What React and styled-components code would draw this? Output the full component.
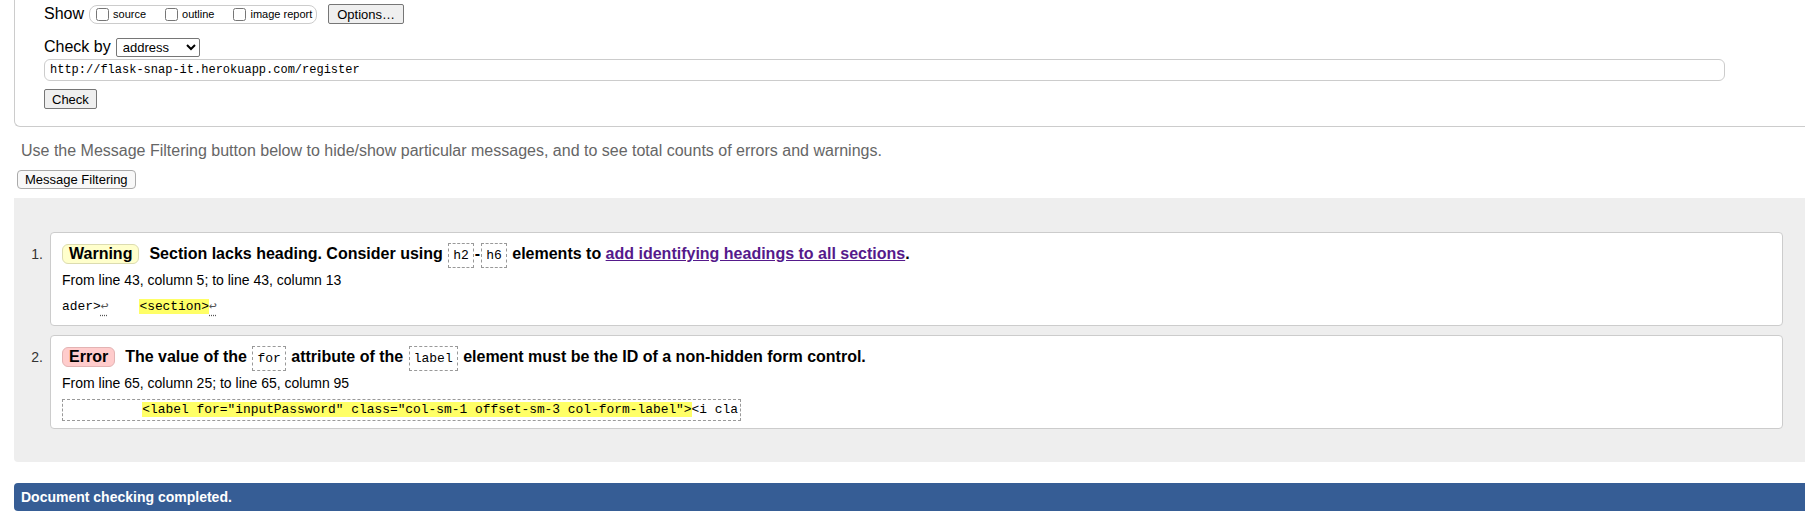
import React from "react";
import styled, { createGlobalStyle } from "styled-components";

const mono = `"Liberation Mono", "DejaVu Sans Mono", monospace`;

const GlobalStyle = createGlobalStyle`
  html, body {
    margin: 0;
    padding: 0;
    background: #fff;
    overflow: hidden;
  }
  body {
    font-family: "Liberation Sans", Arial, sans-serif;
    color: #000;
  }
`;

function App() {
  return (
    <Page>
      <GlobalStyle />
      <FormBox>
        <Row>
          <FieldLabel>Show</FieldLabel>
          <Options>
            <Opt>
              <Box type="checkbox" />
              source
            </Opt>
            <Opt>
              <Box type="checkbox" />
              outline
            </Opt>
            <Opt $last>
              <Box type="checkbox" />
              image report
            </Opt>
          </Options>
          <Btn $ml={11}>Options…</Btn>
        </Row>
        <Row $gap={13}>
          <FieldLabel>Check by</FieldLabel>
          <Select defaultValue="address">
            <option value="address">address</option>
            <option value="file">file upload</option>
            <option value="text">text input</option>
          </Select>
        </Row>
        <UrlInput defaultValue="http://flask-snap-it.herokuapp.com/register" />
        <Row $gap={8}>
          <Btn $pad={7}>Check</Btn>
        </Row>
      </FormBox>

      <Hint>
        Use the Message Filtering button below to hide/show particular messages, and to see total counts of errors and warnings.
      </Hint>
      <FilterBtn>Message Filtering</FilterBtn>

      <Results>
        <Item>
          <Num>1.</Num>
          <Msg>
            <Title>
              <Badge $kind="warning">Warning</Badge>
              Section lacks heading. Consider using <Code>h2</Code>-<Code>h6</Code> elements to{" "}
              <Link href="#">add identifying headings to all sections</Link>.
            </Title>
            <Location>From line 43, column 5; to line 43, column 13</Location>
            <Extract>
              ader&gt;<Lf>↩</Lf>{"    "}<Mark>&lt;section&gt;</Mark><Lf>↩</Lf>
            </Extract>
          </Msg>
        </Item>
        <Item>
          <Num>2.</Num>
          <Msg>
            <Title>
              <Badge $kind="error">Error</Badge>
              The value of the <Code>for</Code> attribute of the <Code>label</Code> element must be the ID of a non-hidden form control.
            </Title>
            <Location>From line 65, column 25; to line 65, column 95</Location>
            <Extract $boxed>
              {"          "}
              <Mark>&lt;label for="inputPassword" class="col-sm-1 offset-sm-3 col-form-label"&gt;</Mark>
              &lt;i cla
            </Extract>
          </Msg>
        </Item>
      </Results>

      <Summary>Document checking completed.</Summary>
    </Page>
  );
}

export default App;

const Page = styled.div`
  padding-left: 14px;
  width: 1791px;
`;

const FormBox = styled.div`
  border-left: 1px solid #ccc;
  border-bottom: 1px solid #ccc;
  border-bottom-left-radius: 6px;
  padding: 4px 0 17px 29px;
`;

const Row = styled.div`
  display: flex;
  align-items: center;
  height: 20px;
  margin-top: ${(p) => p.$gap || 0}px;
`;

const FieldLabel = styled.span`
  font-size: 16px;
  margin-right: 5px;
`;

const Options = styled.span`
  display: inline-flex;
  align-items: center;
  height: 17px;
  border: 1px solid #ccc;
  border-radius: 8px;
  padding: 0 4px 0 6px;
`;

const Opt = styled.label`
  display: inline-flex;
  align-items: center;
  font-size: 11px;
  margin-right: ${(p) => (p.$last ? 0 : 19)}px;
`;

const Box = styled.input`
  width: 13px;
  height: 13px;
  margin: 0 4px 0 0;
`;

const Btn = styled.button`
  font-family: inherit;
  font-size: 13px;
  height: 20px;
  padding: 0 ${(p) => p.$pad || 8}px;
  margin-left: ${(p) => p.$ml || 0}px;
  background: #efefef;
  border: 1px solid #767676;
  border-radius: 2px;
  color: #000;
`;

const Select = styled.select`
  font-family: inherit;
  font-size: 13px;
  width: 84px;
  height: 19px;
  border: 1px solid #767676;
  border-radius: 2px;
  background: #fff;
  color: #000;
  padding: 0 2px;
`;

const UrlInput = styled.input`
  display: block;
  box-sizing: border-box;
  width: 1681px;
  height: 22px;
  margin-top: 2px;
  border: 1px solid #ccc;
  border-radius: 6px;
  padding: 0 5px;
  font-family: ${mono};
  font-size: 12px;
  color: #000;
`;

const Hint = styled.p`
  margin: 15px 0 0 7px;
  font-size: 16px;
  line-height: 18px;
  color: #666;
`;

const FilterBtn = styled.button`
  display: block;
  margin: 10px 0 0 3px;
  height: 19px;
  padding: 0 7px;
  font-family: inherit;
  font-size: 13px;
  color: #000;
  background: #f8f8f8;
  border: 1px solid #aaa;
  border-radius: 4px;
`;

const Results = styled.div`
  margin-top: 9px;
  background: #eee;
  border-bottom-left-radius: 4px;
  padding: 34px 22px 33px 0;
  display: flex;
  flex-direction: column;
  gap: 9px;
`;

const Item = styled.div`
  display: grid;
  grid-template-columns: 36px 1fr;
`;

const Num = styled.div`
  text-align: right;
  padding: 12px 7px 0 0;
  font-size: 14px;
  line-height: 20px;
  color: #333;
`;

const Msg = styled.div`
  background: #fff;
  border: 1px solid #ccc;
  border-radius: 4px;
  padding: 11px 11px 7px;
`;

const Title = styled.div`
  font-size: 16px;
  font-weight: bold;
  line-height: 20px;
`;

const Badge = styled.span`
  display: inline-block;
  vertical-align: top;
  line-height: 18px;
  padding: 0 6px;
  margin-right: 10px;
  border-radius: 6px;
  border: 1px solid ${(p) => (p.$kind === "error" ? "#e3b3b3" : "#dcdcb0")};
  background: ${(p) => (p.$kind === "error" ? "#ffcccc" : "#ffffcc")};
`;

const Code = styled.code`
  font-family: ${mono};
  font-size: 13px;
  line-height: 14px;
  font-weight: normal;
  border: 1px dashed #999;
  padding: 4px 4px;
  margin: 0 1px;
`;

const Link = styled.a`
  color: #551a8b;
  text-decoration: underline;
`;

const Location = styled.div`
  margin-top: 8px;
  font-size: 14px;
  line-height: 17px;
`;

const Extract = styled.div`
  margin-top: 7px;
  width: fit-content;
  white-space: pre;
  font-family: ${mono};
  font-size: 12.9px;
  line-height: 16px;
  padding: ${(p) => (p.$boxed ? "2px" : "3px 0")};
  border: ${(p) => (p.$boxed ? "1px dashed #999" : "none")};
`;

const Mark = styled.span`
  background: #ffff66;
`;

const Lf = styled.span`
  color: #555;
  text-decoration: underline dotted #555;
  text-underline-offset: 5px;
`;

const Summary = styled.div`
  margin-top: 21px;
  height: 28px;
  display: flex;
  align-items: center;
  padding-left: 7px;
  background: #365d95;
  color: #fff;
  font-size: 14px;
  font-weight: bold;
  border-radius: 4px 0 0 4px;
`;
